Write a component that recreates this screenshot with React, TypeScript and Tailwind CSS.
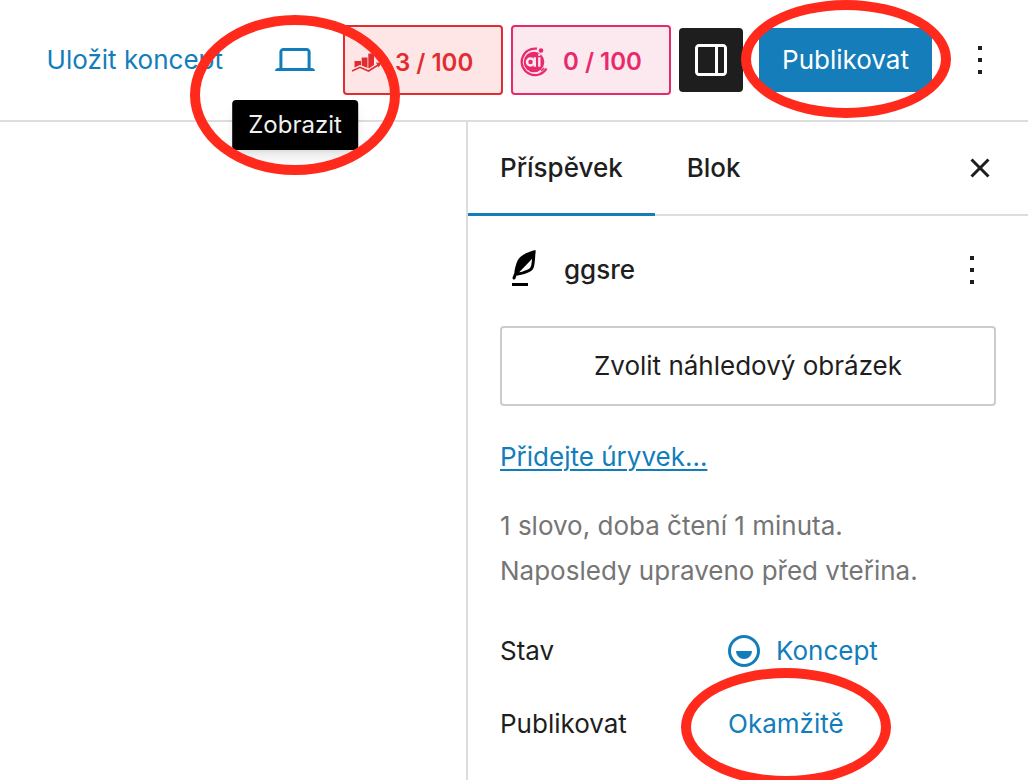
import type { ReactNode } from "react";

const paths = {
  desktop:
    "M20.5 16h-.7V8c0-1.1-.9-2-2-2H6.2c-1.1 0-2 .9-2 2v8h-.7c-.8 0-1.5.7-1.5 1.5h20c0-.8-.7-1.5-1.5-1.5zM5.7 8c0-.3.2-.5.5-.5h11.6c.3 0 .5.2.5.5v8H5.7V8z",
  drawer:
    "M18 4H6c-1.1 0-2 .9-2 2v12c0 1.1.9 2 2 2h12c1.1 0 2-.9 2-2V6c0-1.1-.9-2-2-2zm-4 14.5H6c-.3 0-.5-.2-.5-.5V6c0-.3.2-.5.5-.5h8v13zm4.5-.5c0 .3-.2.5-.5.5h-2.5v-13H18c.3 0 .5.2.5.5v12z",
  more: "M13 19h-2v-2h2v2zm0-6h-2v-2h2v2zm0-6h-2V5h2v2z",
  close:
    "M12 13.06l3.712 3.713 1.061-1.06L13.061 12l3.712-3.712-1.06-1.06L12 10.938 8.288 7.227l-1.061 1.06L10.939 12l-3.712 3.712 1.06 1.061L12 13.061z",
  verse:
    "M17.8 2l-.9.3c-.1 0-3.6 1-5.2 2.1C10 5.5 9.3 6.5 8.9 7.1c-.6.9-1.7 4.7-1.7 6.3l-.9 2.3c-.2.4 0 .8.4 1 .1 0 .2.1.3.1.3 0 .6-.2.7-.5l.6-1.5c.3 0 .7-.1 1.2-.2.7-.1 1.4-.3 2.2-.5.8-.2 1.6-.5 2.4-.8.7-.3 1.4-.7 1.9-1.2s.8-1.2 1-1.9c.2-.7.3-1.6.4-2.4.1-.8.1-1.7.2-2.5 0-.8.1-1.5.2-2.1V2zm-1.9 5.6c-.1.8-.2 1.5-.3 2.1-.2.6-.4 1-.6 1.3-.3.3-.8.6-1.4.9-.7.3-1.4.5-2.2.8-.6.2-1.3.3-1.8.4L15 7.5c.3-.3.6-.7 1-1.1 0 .4 0 .8-.1 1.2zM6 20h8v-1.5H6V20z",
  draft:
    "M12 18.5a6.5 6.5 0 1 1 0-13 6.5 6.5 0 0 1 0 13Zm4-6.5a4 4 0 0 1-8 0h8Zm-4-8a8 8 0 1 0 0 16 8 8 0 0 0 0-16Z",
};

function Icon({ name, className = "" }: { name: keyof typeof paths; className?: string }) {
  return (
    <svg viewBox="0 0 24 24" fill="currentColor" className={`size-12 shrink-0 ${className}`} aria-hidden="true">
      <path d={paths[name]} />
    </svg>
  );
}

// Red marker drawn around the controls the guide talks about
function Ring({ className }: { className: string }) {
  return (
    <span
      className={`pointer-events-none absolute left-1/2 z-20 w-[210px] -translate-x-1/2 rounded-[50%] border-10 border-[#ff2a1c] ${className}`}
    />
  );
}

function SeoIcon() {
  return (
    <svg viewBox="0 0 32 22" className="h-[22px] w-8 shrink-0" fill="currentColor" aria-hidden="true">
      <path d="M3.5 9H10v4.500l-1-.5-5.500 2.500zM10.700 5.500h5.800V16l-5.800-2.500zM17.300 1.500H23V13l-4.500 3-1.200.3z" />
      <path d="M1 19l8-3.700 8.500 3.700L28 12.500" fill="none" stroke="currentColor" strokeWidth="1.600" />
      <path d="M25 10.500l5.500.2-2.800 4.800z" />
    </svg>
  );
}

function AiIcon() {
  return (
    <svg viewBox="0 0 32 32" className="size-8 shrink-0" fill="none" stroke="currentColor" aria-hidden="true">
      <path d="M18 2.700A13.300 13.300 0 1 0 27.500 22.500" strokeWidth="2.200" />
      <circle cx="15" cy="16" r="10.300" fill="currentColor" stroke="none" />
      <path d="M25 22a12 12 0 0 1-3 3" strokeWidth="1.500" />
      <circle cx="22" cy="4.500" r="2.300" fill="currentColor" stroke="none" />
      <circle cx="11.500" cy="16" r="3.500" stroke="#fce8ef" strokeWidth="2.500" />
      <path d="M15.800 11.300v9.500M20.300 11.300v9.500" stroke="#fce8ef" strokeWidth="2.400" />
      <circle cx="20.300" cy="8.800" r="1.300" fill="#fce8ef" stroke="none" />
    </svg>
  );
}

function Row({ label, children }: { label: string; children: ReactNode }) {
  return (
    <div className="flex h-16 items-center">
      <dt className="w-[228px]">{label}</dt>
      <dd>{children}</dd>
    </div>
  );
}

export default function App() {
  return (
    <div className="flex h-screen flex-col overflow-hidden bg-white font-['Inter','Liberation_Sans',sans-serif] text-[26px] leading-8 text-[#1e1e1e]">
      <header className="flex h-[122px] shrink-0 items-center justify-end border-b-2 border-[#ddd] pr-6">
        <button className="mr-12 whitespace-nowrap text-[#127dbb]">Uložit koncept</button>
        <div className="relative mr-6">
          <button className="block text-[#127dbb]" aria-label="Zobrazit">
            <Icon name="desktop" />
          </button>
          <span
            role="tooltip"
            className="absolute top-16 left-1/2 z-10 -translate-x-1/2 rounded-sm bg-black px-4 py-2 text-2xl leading-[34px] text-[#f0f0f0] shadow-lg"
          >
            Zobrazit
          </span>
          <Ring className="-top-[21px] h-40" />
        </div>
        <button className="mr-2 flex h-[70px] w-40 items-center gap-3 rounded-sm border-2 border-[#e12d32] bg-[#fde6e5] px-1.5 pt-1.5 text-2xl font-semibold whitespace-nowrap text-[#e12d32]">
          <SeoIcon />
          3 / 100
        </button>
        <button className="mr-2 flex h-[70px] w-40 items-center gap-3 rounded-sm border-2 border-[#e82a6c] bg-[#fce8ef] px-1.5 pt-1 text-2xl font-semibold whitespace-nowrap text-[#e82a6c]">
          <AiIcon />
          0 / 100
        </button>
        <button className="mr-4 rounded-sm bg-[#1e1e1e] p-2 text-white" aria-label="Nastavení">
          <Icon name="drawer" />
        </button>
        <button className="relative mr-6 h-16 w-[173px] bg-[#147dba] text-white">
          Publikovat
          <Ring className="-top-7 h-[118px]" />
        </button>
        <button aria-label="Možnosti">
          <Icon name="more" />
        </button>
      </header>

      <div className="flex flex-1">
        <main className="flex-1" />
        <aside className="w-[562px] border-l-2 border-[#ddd]">
          <div className="flex h-[94px] items-stretch border-b-2 border-[#ddd] pr-6 font-medium">
            <button className="-mb-0.5 border-b-3 border-[#147dba] px-8">Příspěvek</button>
            <button className="px-8">Blok</button>
            <button className="ml-auto" aria-label="Zavřít">
              <Icon name="close" />
            </button>
          </div>

          <div className="px-8 pt-[30px]">
            <div className="flex items-center gap-4">
              <Icon name="verse" className="text-black" />
              <h2 className="flex-1 font-medium">ggsre</h2>
              <button aria-label="Akce">
                <Icon name="more" />
              </button>
            </div>

            <button className="mt-8 h-20 w-full rounded-sm border-2 border-[#ccc]">Zvolit náhledový obrázek</button>
            <a href="#excerpt" className="mt-[35px] inline-block text-[#127dbb] underline decoration-2 underline-offset-3">
              Přidejte úryvek…
            </a>
            <p className="mt-[30px] leading-[45px] text-[#757575]">
              1 slovo, doba čtení 1 minuta.
              <br />
              Naposledy upraveno před vteřina.
            </p>
            <dl className="mt-[26px] flex flex-col gap-[9px]">
              <Row label="Stav">
                <button className="-ml-2 flex items-center gap-2 text-[#127dbb]">
                  <Icon name="draft" />
                  Koncept
                </button>
              </Row>
              <Row label="Publikovat">
                <button className="relative text-[#127dbb]">
                  Okamžitě
                  <Ring className="-top-10 h-[118px]" />
                </button>
              </Row>
            </dl>
          </div>
        </aside>
      </div>
    </div>
  );
}
